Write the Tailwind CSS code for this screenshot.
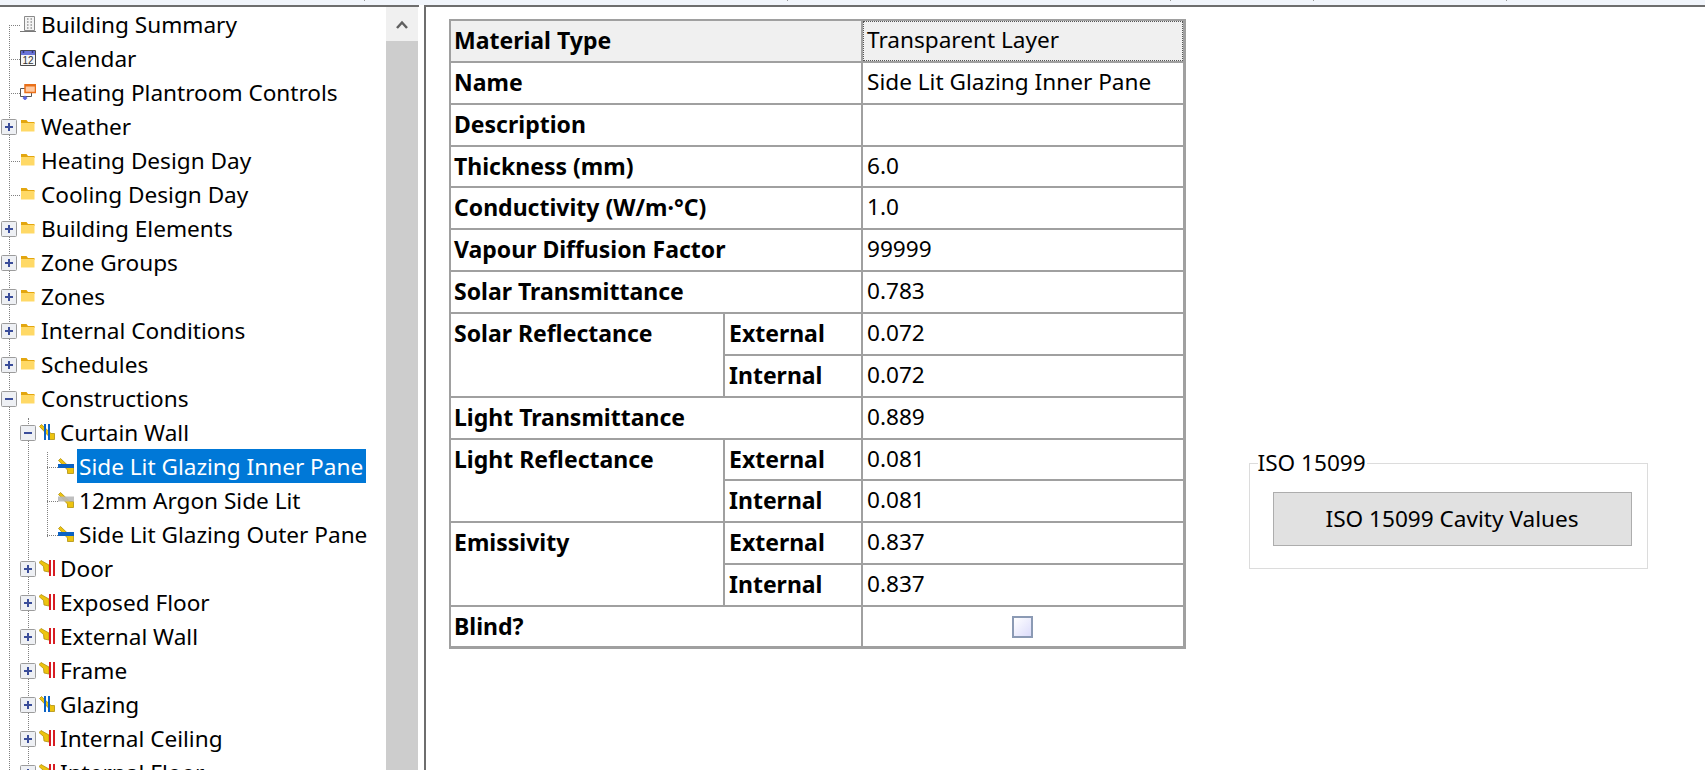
<!DOCTYPE html>
<html lang="en">
<head>
<meta charset="utf-8">
<title>Construction editor</title>
<script src="https://cdn.jsdelivr.net/npm/@tailwindcss/browser@4"></script>
</head>
<body class="bg-white overflow-hidden">
<svg width="0" height="0" class="absolute">
  <defs>
    <symbol id="folder" viewBox="0 0 16 16"><path d="M1 2h5.500l1.500 2h6.500v2H1z" fill="#e3a60f"/><path d="M1 5h13.500v8.500H1z" fill="#ffd966"/></symbol>
    <symbol id="building" viewBox="0 0 16 16"><path d="M4.500 .5h10v14h-10z" fill="#f4f4f4" stroke="#8a8a8a"/><path d="M0 15.500h16" stroke="#777" stroke-width="1"/><path d="M7 3h1.500M10.500 3H12M7 6h1.500M10.500 6H12M7 9h1.500M10.500 9H12M7 12h1.500M10.500 12H12" stroke="#666"/></symbol>
    <symbol id="calendar" viewBox="0 0 16 16"><path d="M.5 .5h15v15H.5z" fill="#f6f6f6" stroke="#4a4a4a"/><path d="M1 1h14v4H1z" fill="#6a74d8"/><path d="M3.500 0v3M12.500 0v3" stroke="#33397f" stroke-width="1.500"/><text x="8" y="14.300" text-anchor="middle" font-size="10" font-family="Liberation Sans" fill="#333">12</text></symbol>
    <symbol id="control" viewBox="0 0 16 16"><path d="M.5 4.500h11v8H.5z" fill="#fff" stroke="#555"/><path d="M5 .5h10.500v8H5z" fill="#ffc9a0" stroke="#e9701a" stroke-width="1.500"/><path d="M5 .5h10.500v2H5z" fill="#e9701a"/><path d="M5 11.500l2.500 2.500L5 16.500 2.500 14z" fill="#5a67e0"/></symbol>
    <symbol id="wall-blue" viewBox="0 0 16 16"><path d="M.5 2.500L2.500 .5 12 9.500h3.500v6H9.500V12z" fill="#edc30f" stroke="#b0900f" stroke-width=".8"/><path d="M6 0v16M10 0v16" stroke="#0b62c4" stroke-width="2"/></symbol>
    <symbol id="wall-red" viewBox="0 0 16 16"><path d="M0 2.500L2 .5l8 4.500v7l-5-1-.5-4.500z" fill="#edc30f" stroke="#b0900f" stroke-width=".8"/><path d="M11 0v16M15 0v16" stroke="#d81d23" stroke-width="2"/></symbol>
    <symbol id="layer-blue" viewBox="0 0 16 16"><path d="M.5 2.500L2.500 .5 12 9.500h3.500v6H9.500V12z" fill="#edc30f" stroke="#b0900f" stroke-width=".8"/><path d="M0 8h16" stroke="#0b62c4" stroke-width="4"/></symbol>
    <symbol id="layer-grey" viewBox="0 0 16 16"><path d="M.5 2.500L2.500 .5 12 9.500h3.500v6H9.500V12z" fill="#edc30f" stroke="#b0900f" stroke-width=".8"/><path d="M0 7h16" stroke="#b9b9b9" stroke-width="5" opacity=".9"/></symbol>
    <symbol id="plus" viewBox="0 0 16 16"><path d="M.5 1.500a1 1 0 0 1 1-1h13a1 1 0 0 1 1 1v13a1 1 0 0 1-1 1h-13a1 1 0 0 1-1-1z" fill="#eef0f4" stroke="#9c9c9c"/><path d="M4 8h8M8 4v8" stroke="#3a4d9a" stroke-width="2"/></symbol>
    <symbol id="minus" viewBox="0 0 16 16"><path d="M.5 1.500a1 1 0 0 1 1-1h13a1 1 0 0 1 1 1v13a1 1 0 0 1-1 1h-13a1 1 0 0 1-1-1z" fill="#eef0f4" stroke="#9c9c9c"/><path d="M4 8h8" stroke="#3a4d9a" stroke-width="2"/></symbol>
  </defs>
</svg>

<div class="w-[1705px] h-[770px] flex flex-col overflow-hidden font-['Noto_Sans',sans-serif] text-black">
  <div class="h-[5px] shrink-0 bg-[#f1f5fb] relative">
    <span class="absolute left-[364px] top-0 w-px h-px bg-[#999]"></span>
    <span class="absolute left-[787px] top-0 w-px h-px bg-[#999]"></span>
    <span class="absolute left-[1170px] top-0 w-px h-px bg-[#999]"></span>
    <span class="absolute left-[1313px] top-0 w-px h-px bg-[#999]"></span>
    <span class="absolute left-[1506px] top-0 w-px h-px bg-[#999]"></span>
  </div>
  <div class="h-[2px] shrink-0 flex">
    <div class="w-[419px] bg-[#6e6e6e]"></div>
    <div class="w-[5px] bg-white"></div>
    <div class="flex-1 bg-[#6e6e6e]"></div>
  </div>

  <div class="flex-1 flex min-h-0">
    <!-- Tree -->
    <div class="w-[386px] shrink-0 relative overflow-hidden text-[22.600px] leading-[32px] whitespace-nowrap">
      <div class="absolute left-[9px] top-[18px] bottom-0 border-l border-dotted border-[#808080]"></div>
      <div class="absolute left-[28px] top-[411px] bottom-0 border-l border-dotted border-[#808080]"></div>
      <div class="absolute left-[47px] top-[445px] h-[85px] border-l border-dotted border-[#808080]"></div>

      <div class="relative h-[34px] flex items-center pl-[20px]"><span class="absolute left-[9px] w-[11px] top-[18px] border-t border-dotted border-[#808080]"></span><svg class="w-4 h-4 mr-[5px] relative"><use href="#building"/></svg><span class="pt-[2px]">Building Summary</span></div>
      <div class="relative h-[34px] flex items-center pl-[20px]"><span class="absolute left-[9px] w-[11px] top-[18px] border-t border-dotted border-[#808080]"></span><svg class="w-4 h-4 mr-[5px] relative"><use href="#calendar"/></svg><span class="pt-[2px]">Calendar</span></div>
      <div class="relative h-[34px] flex items-center pl-[20px]"><span class="absolute left-[9px] w-[11px] top-[18px] border-t border-dotted border-[#808080]"></span><svg class="w-4 h-4 mr-[5px] relative"><use href="#control"/></svg><span class="pt-[2px]">Heating Plantroom Controls</span></div>
      <div class="relative h-[34px] flex items-center pl-[20px]"><svg class="absolute left-[1px] top-[10px] w-4 h-4"><use href="#plus"/></svg><svg class="w-4 h-4 mr-[5px] relative"><use href="#folder"/></svg><span class="pt-[2px]">Weather</span></div>
      <div class="relative h-[34px] flex items-center pl-[20px]"><span class="absolute left-[9px] w-[11px] top-[18px] border-t border-dotted border-[#808080]"></span><svg class="w-4 h-4 mr-[5px] relative"><use href="#folder"/></svg><span class="pt-[2px]">Heating Design Day</span></div>
      <div class="relative h-[34px] flex items-center pl-[20px]"><span class="absolute left-[9px] w-[11px] top-[18px] border-t border-dotted border-[#808080]"></span><svg class="w-4 h-4 mr-[5px] relative"><use href="#folder"/></svg><span class="pt-[2px]">Cooling Design Day</span></div>
      <div class="relative h-[34px] flex items-center pl-[20px]"><svg class="absolute left-[1px] top-[10px] w-4 h-4"><use href="#plus"/></svg><svg class="w-4 h-4 mr-[5px] relative"><use href="#folder"/></svg><span class="pt-[2px]">Building Elements</span></div>
      <div class="relative h-[34px] flex items-center pl-[20px]"><svg class="absolute left-[1px] top-[10px] w-4 h-4"><use href="#plus"/></svg><svg class="w-4 h-4 mr-[5px] relative"><use href="#folder"/></svg><span class="pt-[2px]">Zone Groups</span></div>
      <div class="relative h-[34px] flex items-center pl-[20px]"><svg class="absolute left-[1px] top-[10px] w-4 h-4"><use href="#plus"/></svg><svg class="w-4 h-4 mr-[5px] relative"><use href="#folder"/></svg><span class="pt-[2px]">Zones</span></div>
      <div class="relative h-[34px] flex items-center pl-[20px]"><svg class="absolute left-[1px] top-[10px] w-4 h-4"><use href="#plus"/></svg><svg class="w-4 h-4 mr-[5px] relative"><use href="#folder"/></svg><span class="pt-[2px]">Internal Conditions</span></div>
      <div class="relative h-[34px] flex items-center pl-[20px]"><svg class="absolute left-[1px] top-[10px] w-4 h-4"><use href="#plus"/></svg><svg class="w-4 h-4 mr-[5px] relative"><use href="#folder"/></svg><span class="pt-[2px]">Schedules</span></div>
      <div class="relative h-[34px] flex items-center pl-[20px]"><svg class="absolute left-[1px] top-[10px] w-4 h-4"><use href="#minus"/></svg><svg class="w-4 h-4 mr-[5px] relative"><use href="#folder"/></svg><span class="pt-[2px]">Constructions</span></div>

      <div class="relative h-[34px] flex items-center pl-[39px]"><svg class="absolute left-[20px] top-[10px] w-4 h-4"><use href="#minus"/></svg><svg class="w-4 h-4 mr-[5px] relative"><use href="#wall-blue"/></svg><span class="pt-[2px]">Curtain Wall</span></div>
      <div class="relative h-[34px] flex items-center pl-[58px]"><span class="absolute left-[47px] w-[11px] top-[18px] border-t border-dotted border-[#808080]"></span><svg class="w-4 h-4 mr-[3px] relative"><use href="#layer-blue"/></svg><span class="pt-[2px] bg-[#0078d7] text-white px-[2px] w-[289px]">Side Lit Glazing Inner Pane</span></div>
      <div class="relative h-[34px] flex items-center pl-[58px]"><span class="absolute left-[47px] w-[11px] top-[18px] border-t border-dotted border-[#808080]"></span><svg class="w-4 h-4 mr-[5px] relative"><use href="#layer-grey"/></svg><span class="pt-[2px]">12mm Argon Side Lit</span></div>
      <div class="relative h-[34px] flex items-center pl-[58px]"><span class="absolute left-[47px] w-[11px] top-[18px] border-t border-dotted border-[#808080]"></span><svg class="w-4 h-4 mr-[5px] relative"><use href="#layer-blue"/></svg><span class="pt-[2px]">Side Lit Glazing Outer Pane</span></div>

      <div class="relative h-[34px] flex items-center pl-[39px]"><svg class="absolute left-[20px] top-[10px] w-4 h-4"><use href="#plus"/></svg><svg class="w-4 h-4 mr-[5px] relative"><use href="#wall-red"/></svg><span class="pt-[2px]">Door</span></div>
      <div class="relative h-[34px] flex items-center pl-[39px]"><svg class="absolute left-[20px] top-[10px] w-4 h-4"><use href="#plus"/></svg><svg class="w-4 h-4 mr-[5px] relative"><use href="#wall-red"/></svg><span class="pt-[2px]">Exposed Floor</span></div>
      <div class="relative h-[34px] flex items-center pl-[39px]"><svg class="absolute left-[20px] top-[10px] w-4 h-4"><use href="#plus"/></svg><svg class="w-4 h-4 mr-[5px] relative"><use href="#wall-red"/></svg><span class="pt-[2px]">External Wall</span></div>
      <div class="relative h-[34px] flex items-center pl-[39px]"><svg class="absolute left-[20px] top-[10px] w-4 h-4"><use href="#plus"/></svg><svg class="w-4 h-4 mr-[5px] relative"><use href="#wall-red"/></svg><span class="pt-[2px]">Frame</span></div>
      <div class="relative h-[34px] flex items-center pl-[39px]"><svg class="absolute left-[20px] top-[10px] w-4 h-4"><use href="#plus"/></svg><svg class="w-4 h-4 mr-[5px] relative"><use href="#wall-blue"/></svg><span class="pt-[2px]">Glazing</span></div>
      <div class="relative h-[34px] flex items-center pl-[39px]"><svg class="absolute left-[20px] top-[10px] w-4 h-4"><use href="#plus"/></svg><svg class="w-4 h-4 mr-[5px] relative"><use href="#wall-red"/></svg><span class="pt-[2px]">Internal Ceiling</span></div>
      <div class="relative h-[34px] flex items-center pl-[39px]"><svg class="absolute left-[20px] top-[10px] w-4 h-4"><use href="#plus"/></svg><svg class="w-4 h-4 mr-[5px] relative"><use href="#wall-red"/></svg><span class="pt-[2px]">Internal Floor</span></div>
    </div>

    <!-- Scrollbar -->
    <div class="w-[32px] shrink-0 flex flex-col bg-[#cdcdcd]">
      <div class="h-[34px] bg-[#f0f0f0] flex items-center justify-center">
        <svg class="w-[12px] h-[9px]" viewBox="0 0 12 9"><path d="M1 8l5-5.500L11 8" fill="none" stroke="#606060" stroke-width="2.500"/></svg>
      </div>
    </div>
    <div class="w-[6px] shrink-0 bg-white"></div>
    <div class="w-[2px] shrink-0 bg-[#6e6e6e]"></div>

    <!-- Editor -->
    <div class="flex-1 flex items-start pl-[23px] pt-[12px] min-w-0">
      <table class="w-[734px] table-fixed border-collapse border-r-[3px] border-b-[3px] border-[#a0a0a0] text-[22.600px] leading-[38px]">
        <colgroup><col class="w-[274px]"><col class="w-[138px]"><col class="w-[322px]"></colgroup>
        <tbody>
          <tr class="h-[41.870px] bg-[#f0f0f0]"><th colspan="2" class="border-2 border-[#a0a0a0] px-[3px] text-left align-top font-bold text-[23px]">Material Type</th><td class="border-2 border-[#a0a0a0] px-[4px] align-top outline-1 outline-dotted outline-offset-[-2px] outline-[#555]">Transparent Layer</td></tr>
          <tr class="h-[41.870px]"><th colspan="2" class="border-2 border-[#a0a0a0] px-[3px] text-left align-top font-bold text-[23px]">Name</th><td class="border-2 border-[#a0a0a0] px-[4px] align-top">Side Lit Glazing Inner Pane</td></tr>
          <tr class="h-[41.870px]"><th colspan="2" class="border-2 border-[#a0a0a0] px-[3px] text-left align-top font-bold text-[23px]">Description</th><td class="border-2 border-[#a0a0a0] px-[4px] align-top"></td></tr>
          <tr class="h-[41.870px]"><th colspan="2" class="border-2 border-[#a0a0a0] px-[3px] text-left align-top font-bold text-[23px]">Thickness (mm)</th><td class="border-2 border-[#a0a0a0] px-[4px] align-top">6.0</td></tr>
          <tr class="h-[41.870px]"><th colspan="2" class="border-2 border-[#a0a0a0] px-[3px] text-left align-top font-bold text-[23px]">Conductivity (W/m·°C)</th><td class="border-2 border-[#a0a0a0] px-[4px] align-top">1.0</td></tr>
          <tr class="h-[41.870px]"><th colspan="2" class="border-2 border-[#a0a0a0] px-[3px] text-left align-top font-bold text-[23px]">Vapour Diffusion Factor</th><td class="border-2 border-[#a0a0a0] px-[4px] align-top">99999</td></tr>
          <tr class="h-[41.870px]"><th colspan="2" class="border-2 border-[#a0a0a0] px-[3px] text-left align-top font-bold text-[23px]">Solar Transmittance</th><td class="border-2 border-[#a0a0a0] px-[4px] align-top">0.783</td></tr>
          <tr class="h-[41.870px]"><th rowspan="2" class="border-2 border-[#a0a0a0] px-[3px] text-left align-top font-bold text-[23px]">Solar Reflectance</th><th class="border-2 border-[#a0a0a0] px-[4px] text-left align-top font-bold text-[23px]">External</th><td class="border-2 border-[#a0a0a0] px-[4px] align-top">0.072</td></tr>
          <tr class="h-[41.870px]"><th class="border-2 border-[#a0a0a0] px-[4px] text-left align-top font-bold text-[23px]">Internal</th><td class="border-2 border-[#a0a0a0] px-[4px] align-top">0.072</td></tr>
          <tr class="h-[41.870px]"><th colspan="2" class="border-2 border-[#a0a0a0] px-[3px] text-left align-top font-bold text-[23px]">Light Transmittance</th><td class="border-2 border-[#a0a0a0] px-[4px] align-top">0.889</td></tr>
          <tr class="h-[41.870px]"><th rowspan="2" class="border-2 border-[#a0a0a0] px-[3px] text-left align-top font-bold text-[23px]">Light Reflectance</th><th class="border-2 border-[#a0a0a0] px-[4px] text-left align-top font-bold text-[23px]">External</th><td class="border-2 border-[#a0a0a0] px-[4px] align-top">0.081</td></tr>
          <tr class="h-[41.870px]"><th class="border-2 border-[#a0a0a0] px-[4px] text-left align-top font-bold text-[23px]">Internal</th><td class="border-2 border-[#a0a0a0] px-[4px] align-top">0.081</td></tr>
          <tr class="h-[41.870px]"><th rowspan="2" class="border-2 border-[#a0a0a0] px-[3px] text-left align-top font-bold text-[23px]">Emissivity</th><th class="border-2 border-[#a0a0a0] px-[4px] text-left align-top font-bold text-[23px]">External</th><td class="border-2 border-[#a0a0a0] px-[4px] align-top">0.837</td></tr>
          <tr class="h-[41.870px]"><th class="border-2 border-[#a0a0a0] px-[4px] text-left align-top font-bold text-[23px]">Internal</th><td class="border-2 border-[#a0a0a0] px-[4px] align-top">0.837</td></tr>
          <tr class="h-[41.870px]"><th colspan="2" class="border-2 border-[#a0a0a0] px-[3px] text-left align-top font-bold text-[23px]">Blind?</th><td class="border-2 border-[#a0a0a0] px-[4px] align-middle"><div class="mx-auto w-[21px] h-[22px] border-2 border-[#8b9ab4] bg-gradient-to-br from-white to-[#dcdcfa]"></div></td></tr>
        </tbody>
      </table>

      <fieldset class="ml-[63px] mt-[430px] w-[399px] h-[120px] border border-[#dcdcdc] pl-[23px] pr-[15px]">
        <legend class="ml-[-15px] pr-[1px] text-[22.600px] leading-[28px]">ISO 15099</legend>
        <button class="mt-[15px] w-[359px] h-[54px] bg-[#e1e1e1] border border-[#adadad] text-[22.600px]">ISO 15099 Cavity Values</button>
      </fieldset>
    </div>
  </div>
</div>
</body>
</html>
